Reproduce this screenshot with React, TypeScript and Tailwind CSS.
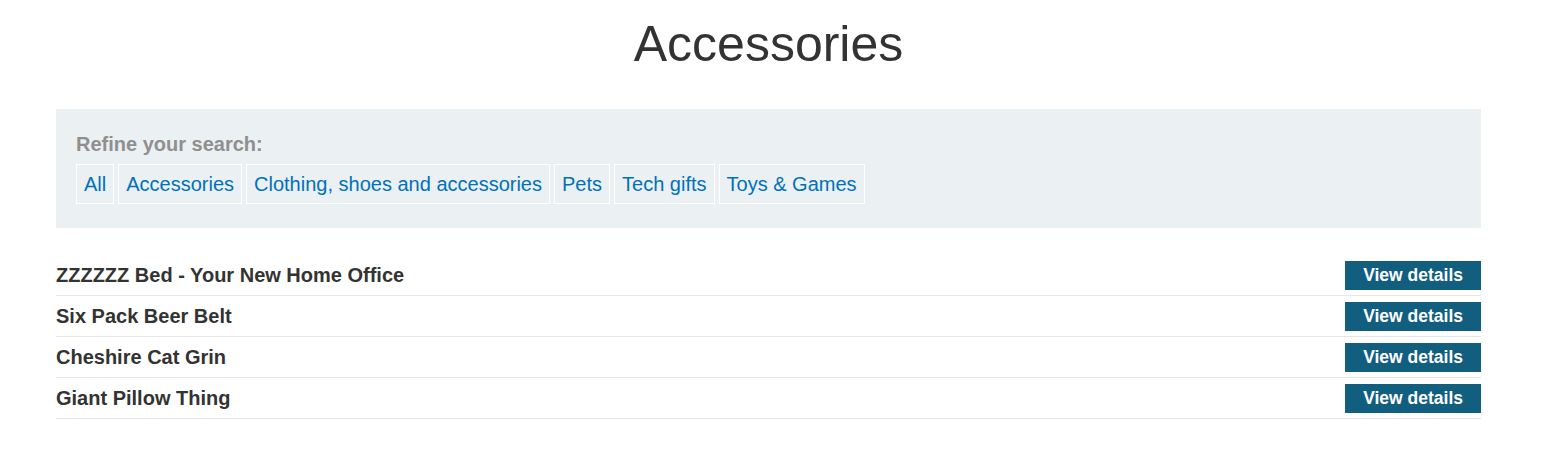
const filters = [
  "All",
  "Accessories",
  "Clothing, shoes and accessories",
  "Pets",
  "Tech gifts",
  "Toys & Games",
];

const products = [
  "ZZZZZZ Bed - Your New Home Office",
  "Six Pack Beer Belt",
  "Cheshire Cat Grin",
  "Giant Pillow Thing",
];

export default function App() {
  return (
    <div className="min-h-[458px] bg-white font-['Liberation_Sans',Arial,sans-serif] text-[#333332]">
      <div className="ml-[56px] w-[1425px] pt-[14px]">
        <h1 className="h-[60px] text-center text-[50px] font-normal leading-[60px] text-[#333333]">
          Accessories
        </h1>

        {/* Filter panel */}
        <section className="mt-[35px] bg-[#ebf0f2] px-[20px] pb-[24px] pt-[23px]">
          <p className="text-[20px] font-bold leading-[24px] text-[#8f8f8f]">
            Refine your search:
          </p>
          <div className="mt-[8px] flex flex-wrap gap-[4px]">
            {filters.map((f) => (
              <a
                key={f}
                href="#"
                className="flex h-[40px] items-center border border-white px-[7px] text-[20px] text-[#0071bc]"
              >
                {f}
              </a>
            ))}
          </div>
        </section>

        {/* Product list */}
        <ul className="mt-[27px]">
          {products.map((p) => (
            <li
              key={p}
              className="flex h-[41px] items-center justify-between border-b border-[#e6e6e6] pt-[1px]"
            >
              <span className="mb-[2px] text-[20px] font-bold">{p}</span>
              <a
                href="#"
                className="flex h-[29px] items-center bg-[#125e7f] px-[18px] text-[17.5px] font-bold text-white"
              >
                View details
              </a>
            </li>
          ))}
        </ul>
      </div>
    </div>
  );
}
